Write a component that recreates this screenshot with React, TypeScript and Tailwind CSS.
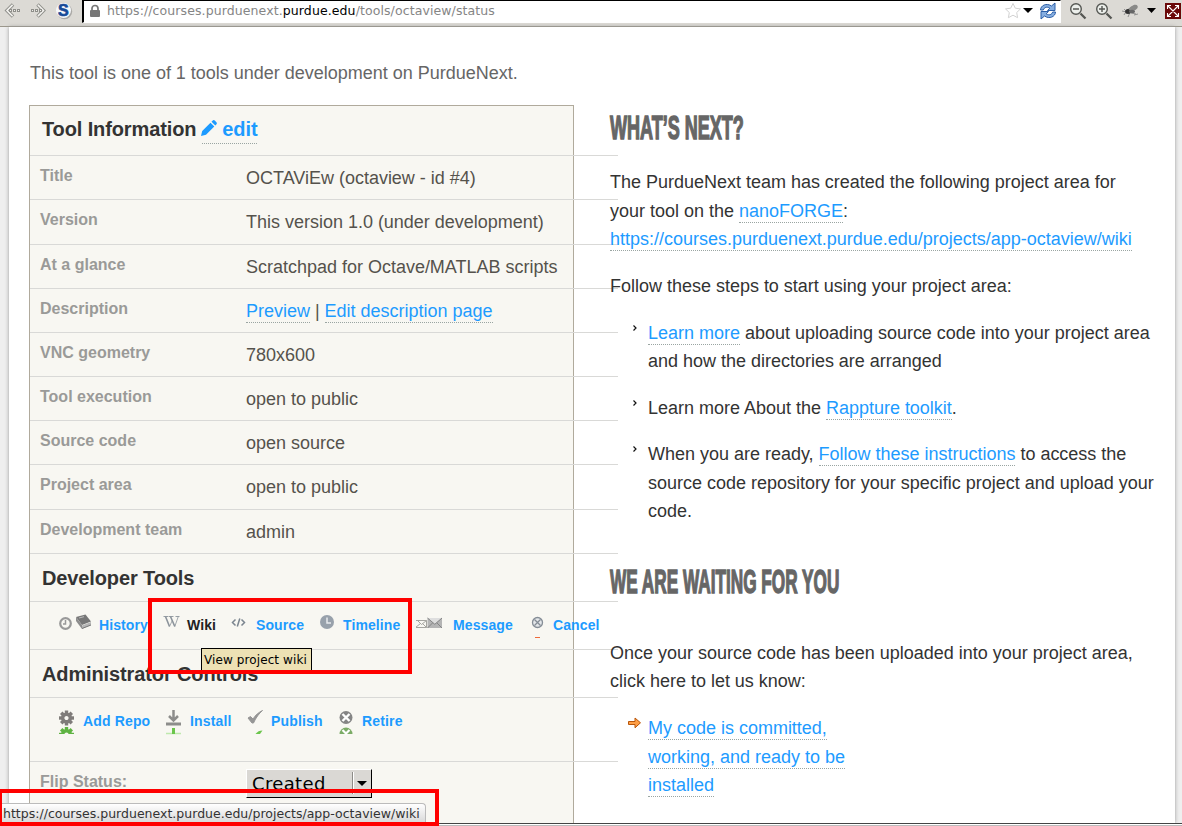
import React from 'react';

function A({ children }: { children: React.ReactNode }) {
  return <a className="border-b border-dotted border-[#9aa5a2] pb-px text-[#1d9bff]">{children}</a>;
}

function Browser() {
  return (
    <header className="flex h-[27px] shrink-0 items-start border-b border-[#9b978b] bg-[#dcdad5]">
      <svg width="82" height="26" viewBox="0 0 82 26" fill="none">
        <g stroke="#8f8f8a" strokeWidth="3.500">
          <path d="M13 4.500 7 10.500l6 6" />
          <path d="M37.500 4.500l6 6-6 6" />
        </g>
        <g stroke="#f4f3f0" strokeWidth="1.500">
          <path d="M12.600 4.900 7 10.500l5.600 5.600" />
          <path d="M37.900 4.900l5.600 5.600-5.600 5.600" />
        </g>
        <g stroke="#8f8f8a" strokeWidth="3" strokeDasharray="3 1">
          <path d="M9 10.500h12M31 10.500h11" />
        </g>
        <g stroke="#f0efec" strokeWidth="1" strokeDasharray="1 3" strokeDashoffset="-1">
          <path d="M9 10.500h12M31 10.500h11" />
        </g>
        <circle cx="64.500" cy="11.500" r="7.700" fill="#aaa9a6" />
        <circle cx="63.500" cy="10.500" r="7.500" fill="#f5f7fa" />
        <text x="58" y="16.300" fontFamily="Liberation Sans, sans-serif" fontWeight="bold" fontSize="16" fill="#164a98" stroke="#164a98" strokeWidth=".7">S</text>
      </svg>
      <div className="flex h-[23px] w-[979px] items-start border-r border-b border-l-2 border-t border-t-black border-r-white border-b-white border-l-black bg-white">
        <svg className="ml-[5px] mt-[3px]" width="12" height="14" viewBox="0 0 12 14">
          <path d="M3 7V4.500a3 3 0 0 1 6 0V7" fill="none" stroke="#777" strokeWidth="1.700" />
          <rect x="1" y="6" width="10" height="7" rx="1" fill="#777" />
        </svg>
        <div className="ml-[6px] whitespace-pre font-['DejaVu_Sans',sans-serif] text-[12.500px] leading-[20px] tracking-[0.100px] text-[#858585]">
          https://courses.purduenext.<span className="text-black">purdue.edu</span>/tools/octaview/status
        </div>
        <svg className="ml-auto" width="56" height="21" viewBox="0 0 56 21">
          <path d="M9 2.500l2.300 4.700 5.200.7-3.800 3.600.9 5.200L9 14.200l-4.600 2.500.9-5.200L1.500 7.900l5.200-.7z" fill="#fff" stroke="#d2d2d2" />
          <path d="M19 7h10l-5 5z" fill="#000" />
          <g fill="#86aee0" stroke="#2b5ea7" strokeWidth="1">
            <path d="M36.500 9C36.500 4.500 42.500 1.500 47.500 5l3.500-3v7.500h-7.500l2.300-2.400c-3-1.800-5.500-.8-6.500 1.900z" />
            <path d="M51.500 11c0 4.500-6 7.500-11 4L37 18v-7.500h7.500l-2.300 2.400c3 1.800 5.500.8 6.500-1.900z" />
          </g>
        </svg>
      </div>
      <svg width="121" height="26" viewBox="1061 0 121 26" fill="none">
        <g stroke="#555753" strokeWidth="1.400">
          <circle cx="1076" cy="9" r="5.300" fill="#ecefeb" />
          <circle cx="1102" cy="9" r="5.300" fill="#ecefeb" />
          <path d="M1080.500 13.500l5 5M1106.500 13.500l5 5" strokeWidth="2.300" />
          <path d="M1073 9h6M1099 9h6M1102 6v6" />
        </g>
        <g>
          <path d="M1122 11l14 3M1124 15l3-5 8-5M1128 17l3-7M1134 15l4-1M1124 9l3 3" stroke="#888" strokeWidth=".9" />
          <ellipse cx="1128" cy="11.500" rx="2.800" ry="2.500" fill="#333" />
          <ellipse cx="1133.500" cy="8" rx="4.500" ry="2.500" fill="#8a8a88" transform="rotate(-25 1133.500 8)" />
          <ellipse cx="1132" cy="11.500" rx="3" ry="1.700" fill="#666" />
        </g>
        <path d="M1147 8h9l-4.500 5z" fill="#000" />
        <rect x="1165" y="3" width="16" height="16" fill="#6a0808" />
        <path d="M1168 6l10 10M1178 6l-10 10M1167.500 9V5.500h3.500M1175 5.500h3.500V9M1178.500 13v3.500H1175M1171 16.500h-3.500V13" stroke="#fff" strokeWidth="1.100" />
      </svg>
    </header>
  );
}

function Row({ label, children, h }: { label: string; children: React.ReactNode; h: string }) {
  return (
    <div className={`flex shrink-0 border-b border-[#d9d9d7] ${h}`}>
      <div className="w-[216px] pl-[10px] pt-[10px] text-[16px] font-bold leading-[20px] tracking-normal text-[#9a9a98]">{label}</div>
      <div className="whitespace-nowrap pt-[12px] leading-[20px] text-[#55524c]">{children}</div>
    </div>
  );
}

function Heading({ children, h }: { children: React.ReactNode; h: string }) {
  return (
    <div className={`flex shrink-0 items-center border-b border-[#d9d9d7] pl-3 text-[20px] font-bold tracking-[-0.120px] text-[#333] ${h}`}>
      {children}
    </div>
  );
}

function Tool({ w, iconW, label, dark, children }: { w: string; iconW: string; label: string; dark?: boolean; children: React.ReactNode }) {
  return (
    <div className={`flex shrink-0 whitespace-nowrap ${w}`}>
      <div className={`shrink-0 ${iconW}`}>{children}</div>
      <span className={dark ? 'text-[#222]' : 'text-[#1d9bff]'}>{label}</span>
    </div>
  );
}

function Ico({ w, children }: { w: number; children: React.ReactNode }) {
  return (
    <svg className="mt-[-2px]" width={w} height="26" viewBox={`0 0 ${w} 26`} fill="none">
      {children}
    </svg>
  );
}

function DevTools() {
  return (
    <div className="flex h-[48px] shrink-0 border-b border-[#d9d9d7] pl-[28px] pt-[13px] text-[14px] font-bold leading-[20px] tracking-[0.100px]">
      <Tool w="w-[105px]" iconW="w-[41px]" label="History">
        <Ico w={36}>
          <circle cx="7.500" cy="10.500" r="5.300" stroke="#999" strokeWidth="2.200" />
          <path d="M7.500 7v4h-2.500" stroke="#999" strokeWidth="1.500" />
          <path d="M18 4l9.500-2.500 5.500 7L24 12z" fill="#777" />
          <path d="M18 4v4l6 8v-4z" fill="#8c8c8c" />
          <path d="M24 12.500l9-3.500v3l-9 4z" fill="#b5b5b5" />
          <path d="M24 15.500l9-3.500" stroke="#777" />
          <path d="M21 5l5-1.300" stroke="#bbb" />
        </Ico>
      </Tool>
      <Tool w="w-[67px]" iconW="w-[24px]" label="Wiki" dark>
        <Ico w={18}>
          <path d="M.5 3.500h5M6 3.500h4.500M12.500 3.500h4" stroke="#8b939b" strokeWidth=".9" />
          <path d="M2.500 3.500L6.500 13.500M7.500 3.500l4.300 10" stroke="#8b939b" strokeWidth="1.600" />
          <path d="M6.500 13.500L9.500 7M11.800 13.500l3.500-10" stroke="#8b939b" strokeWidth=".8" />
        </Ico>
      </Tool>
      <Tool w="w-[89px]" iconW="w-[26px]" label="Source">
        <Ico w={18}>
          <path d="M5.500 6.500L2.500 9.500l3 3M11.500 6.500l3 3-3 3M9.800 5.500l-2.500 8" stroke="#7b858f" strokeWidth="1.500" />
        </Ico>
      </Tool>
      <Tool w="w-[97px]" iconW="w-[24px]" label="Timeline">
        <Ico w={18}>
          <circle cx="8" cy="9" r="7" fill="#98a1ab" />
          <path d="M8 4.500V10h4" stroke="#e7eaee" strokeWidth="1.500" />
        </Ico>
      </Tool>
      <Tool w="w-[115px]" iconW="w-[37px]" label="Message">
        <Ico w={30}>
          <path d="M-.5 7.500h11v7h-11zM1.500 7.500l4 4 5-4M-.5 14.500l5-4M10.500 14.500l-4-4" stroke="#a5a5a0" />
          <path d="M11.500 5h14.500v10H11.500z" fill="#b4b4b4" />
          <path d="M11.500 5h14.500l-7.200 6z" fill="#dedede" />
          <path d="M11.500 5l7.300 6.300L26 5M11.500 15l5-5M26 15l-5-5" stroke="#858585" />
        </Ico>
      </Tool>
      <Tool w="w-[80px]" iconW="w-[22px]" label="Cancel">
        <Ico w={16}>
          <circle cx="6.500" cy="9.500" r="5" fill="#e3e6e9" stroke="#858d96" strokeWidth="1.300" />
          <path d="M3.500 6.500l6 6M9.500 6.500l-6 6" stroke="#858d96" strokeWidth="1.300" />
          <path d="M4 24.500h5" stroke="#ef6a3a" />
        </Ico>
      </Tool>
    </div>
  );
}

function Gear({ y, fill }: { y: number; fill: string }) {
  const teeth = [0, 45, 90, 135, 180, 225, 270, 315];
  return (
    <g transform={`translate(8.500 ${y})`}>
      {teeth.map((t) => (
        <rect key={t} x="-1.700" y="-7.500" width="3.400" height="4" fill={fill} transform={`rotate(${t})`} />
      ))}
      <circle r="3.800" stroke={fill} strokeWidth="3.400" />
    </g>
  );
}

function AdminTools() {
  return (
    <div className="flex h-[64px] shrink-0 border-b border-[#d9d9d7] pl-[28px] pt-[13px] text-[14px] font-bold leading-[20px] tracking-[0.150px]">
      <Tool w="w-[107px]" iconW="w-[25px]" label="Add Repo">
        <Ico w={18}>
          <Gear y={9} fill="#7f7c7a" />
          <Gear y={25.5} fill="#5fb343" />
          <path d="M0 25.500h18" stroke="#f8f7f2" />
        </Ico>
      </Tool>
      <Tool w="w-[82px]" iconW="w-[25px]" label="Install">
        <Ico w={18}>
          <path d="M1 15h15" stroke="#8d8d8b" strokeWidth="3" />
          <path d="M8.500 1v10M4 7l4.500 4.500L13 7" stroke="#8d8d8b" strokeWidth="2.500" />
          <path d="M1 24.500h15" stroke="#bfe8ad" strokeWidth="1.500" />
          <path d="M8.500 19v6" stroke="#6bc54c" strokeWidth="3" />
        </Ico>
      </Tool>
      <Tool w="w-[92px]" iconW="w-[24px]" label="Publish">
        <Ico w={18}>
          <path d="M1 9l2.500-1.500L6 10c2.500-4 5.500-6.500 9.500-8.500-3.500 3-6.500 7-9 12.500H5z" fill="#969696" stroke="#969696" />
          <path d="M8.500 25c2-2.500 4-3.500 7-3.500L13 25z" fill="#6bc54c" />
        </Ico>
      </Tool>
      <Tool w="w-[80px]" iconW="w-[23px]" label="Retire">
        <Ico w={16}>
          <circle cx="7" cy="8.500" r="6.500" fill="#858585" />
          <path d="M3.500 5l7 7M10.500 5l-7 7" stroke="#fff" strokeWidth="2.400" />
          <path d="M.5 25a6.500 6.500 0 0 1 13 0z" fill="#7bab66" />
          <path d="M3.500 21l3.500 3.500 3.500-3.500" stroke="#fff" strokeWidth="2.200" />
        </Ico>
      </Tool>
    </div>
  );
}

function Bullet({ children, arrow }: { children: React.ReactNode; arrow?: boolean }) {
  return (
    <li className="flex">
      <div className={`w-[38px] shrink-0 ${arrow ? 'pl-[18px] pt-[3px]' : 'pl-[23px] pt-[6px]'}`}>
        {arrow ? (
          <svg width="14" height="12" viewBox="0 0 14 12">
            <path d="M.5 4.500h6.500v-3.500l5.500 4.800-5.500 5V7.500H.5z" fill="#ff9f45" stroke="#b9560b" />
          </svg>
        ) : (
          <svg width="4" height="6" viewBox="0 0 4 6" fill="none">
            <path d="M.5.500l2.500 2.500L.5 5.500" stroke="#111" strokeWidth="1.200" />
          </svg>
        )}
      </div>
      <div>{children}</div>
    </li>
  );
}

export default function App() {
  return (
    <div className="relative flex h-[826px] w-[1182px] flex-col overflow-hidden bg-[#efefef] font-['Liberation_Sans',Arial,sans-serif] text-[18px] tracking-[-0.010px] text-[#333]">
      <Browser />
      <main className="ml-[9px] flex h-[796px] w-[1166px] shrink-0 flex-col overflow-hidden bg-white shadow-[0_0_4px_#999]">
        <p className="ml-[21px] mt-[34px] h-[44px] text-[#666] leading-[24px]">This tool is one of 1 tools under development on PurdueNext.</p>
        <div className="flex grow pl-[20px]">
          <section className="flex w-[545px] shrink-0 flex-col border border-b-0 border-[#b0aa9c] bg-[#f8f7f2]">
            <div className="flex w-[588px] flex-col">
              <Heading h="h-[50px]">
                <span className="pb-[3px]">Tool Information</span>
                <a className="ml-[6px] mt-[-2px] flex h-[28px] items-center border-b border-dotted border-[#9aa5a2] text-[#1d9bff]">
                  <svg className="ml-[-1px] mr-[5px] mt-[-2px]" width="16" height="16" viewBox="0 0 16 16" fill="#1d9bff">
                    <path d="M0 16l1.200-5L9.500 2.700l3.800 3.800L5 14.800zM10.500 1.700l1-1c.8-.8 1.600-.8 2.300-.1l1.600 1.600c.7.7.7 1.500-.1 2.300l-1 1z" />
                  </svg>
                  edit
                </a>
              </Heading>
              <Row h="h-[44px]" label="Title">OCTAViEw (octaview - id #4)</Row>
              <Row h="h-[45px]" label="Version">This version 1.0 (under development)</Row>
              <Row h="h-[44px]" label="At a glance">Scratchpad for Octave/MATLAB scripts</Row>
              <Row h="h-[44px]" label="Description"><A>Preview</A> | <A>Edit description page</A></Row>
              <Row h="h-[44px]" label="VNC geometry">780x600</Row>
              <Row h="h-[44px]" label="Tool execution">open to public</Row>
              <Row h="h-[44px]" label="Source code">open source</Row>
              <Row h="h-[45px]" label="Project area">open to public</Row>
              <Row h="h-[44px]" label="Development team">admin</Row>
              <Heading h="h-[48px]">Developer Tools</Heading>
              <DevTools />
              <Heading h="h-[48px]">Administrator Controls</Heading>
              <AdminTools />
              <div className="flex">
                <div className="w-[216px] pl-[10px] pt-[10px] text-[16px] font-bold leading-[20px] tracking-normal text-[#9a9a98]">Flip Status:</div>
                <div className="mt-[7px] flex h-[29px] w-[126px] border-r border-b border-l border-t border-t-white border-l-white border-r-black border-b-black bg-[#dad8d4] pl-[5px] font-['DejaVu_Sans',sans-serif] text-[18px] leading-[27px] tracking-[0.350px] text-black">
                  Created
                  <span className="ml-auto mt-[2px] flex h-[22px] w-[19px] items-center justify-center border-l border-[#8d8b87] shadow-[inset_1px_0_#fff]">
                    <svg width="10" height="5" viewBox="0 0 10 5"><path d="M0 0h10L5 5z" /></svg>
                  </span>
                </div>
              </div>
            </div>
          </section>
          <section className="relative ml-[36px] whitespace-nowrap leading-[28.500px]">
            <h2 className="h-[63px] w-[260px] origin-left scale-x-[0.530] pt-[8px] text-[34px] font-bold tracking-normal text-[#666] [-webkit-text-stroke:1.500px_#666]">WHAT’S NEXT?</h2>
            <p>
              The PurdueNext team has created the following project area for<br />
              your tool on the <A>nanoFORGE</A>:<br />
              <A>https://courses.purduenext.purdue.edu/projects/app-octaview/wiki</A>
            </p>
            <p className="mt-[18.500px]">Follow these steps to start using your project area:</p>
            <ul className="mt-[18px] flex flex-col gap-[18px]">
              <Bullet><A>Learn more</A> about uploading source code into your project area<br />and how the directories are arranged</Bullet>
              <Bullet>Learn more About the <A>Rappture toolkit</A>.</Bullet>
              <Bullet>When you are ready, <A>Follow these instructions</A> to access the<br />source code repository for your specific project and upload your<br />code.</Bullet>
            </ul>
            <h2 className="mt-[41px] h-[72px] w-[460px] origin-left scale-x-[0.506] text-[34px] font-bold tracking-normal text-[#666] [-webkit-text-stroke:1.500px_#666]">WE ARE WAITING FOR YOU</h2>
            <p>Once your source code has been uploaded into your project area,<br />click here to let us know:</p>
            <ul className="mt-[18.500px]">
              <Bullet arrow><A>My code is committed,</A><br /><A>working, and ready to be</A><br /><A>installed</A></Bullet>
            </ul>
          </section>
        </div>
      </main>
      <footer className="h-[3px] shrink-0 border-b border-t border-t-[#444] border-b-[#bbb] bg-white" />
      <div className="absolute left-[201px] top-[648px] h-[24px] w-[111px] whitespace-nowrap border border-black bg-[#ede1b4] pl-[2px] font-['DejaVu_Sans',sans-serif] text-[12px] leading-[22px] tracking-[0.100px] text-black">View project wiki</div>
      <div className="absolute left-[148px] top-[598px] h-[76px] w-[264px] border-4 border-[#f00]" />
      <div className="absolute left-0 top-[803px] h-[20px] w-[426px] whitespace-nowrap rounded-tr border border-b-0 border-[#bbb] bg-linear-to-b from-white to-[#d8d8d8] pl-[2px] font-['DejaVu_Sans',sans-serif] text-[12.500px] leading-[20px] tracking-[0.010px] text-[#333]">https://courses.purduenext.purdue.edu/projects/app-octaview/wiki</div>
      <div className="absolute left-[-2px] top-[789px] h-[37px] w-[441px] border-4 border-[#f00]" />
    </div>
  );
}
